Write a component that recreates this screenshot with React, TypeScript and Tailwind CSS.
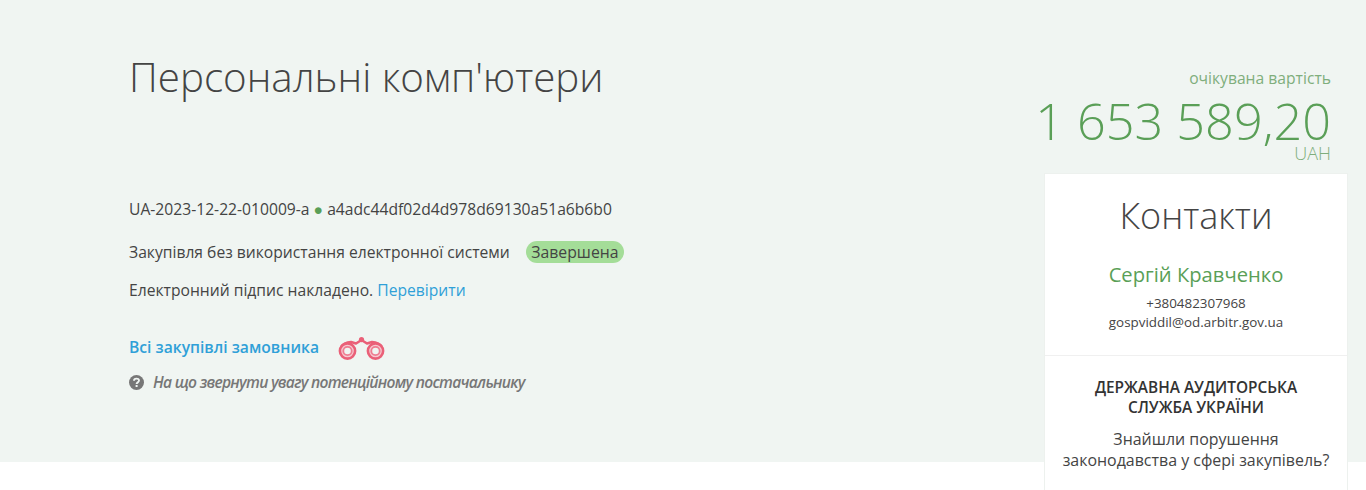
import React from 'react';

function Binoculars() {
  return (
    <svg width="48" height="26" viewBox="0 0 48 26" fill="none">
      <path d="M4 11 Q7 6.5 14 6 L19 7.5 L24.5 4 L30 7.5 L35 6 Q42 6.5 45 11" stroke="#ea6078" strokeWidth="2.6" strokeLinejoin="round" />
      <path d="M4 12 L14 6 L18 13 Z M45 12 L35 6 L31 13 Z" fill="#ea6078" />
      <circle cx="24.5" cy="3.6" r="2.6" fill="#ea6078" />
      <circle cx="10.5" cy="15" r="7.6" fill="#f6c9d1" stroke="#ea6078" strokeWidth="2.6" />
      <circle cx="10.5" cy="15" r="4.2" fill="#f0f5f2" stroke="#ee7d91" strokeWidth="1.8" />
      <circle cx="38.5" cy="15" r="7.6" fill="#f6c9d1" stroke="#ea6078" strokeWidth="2.6" />
      <circle cx="38.5" cy="15" r="4.2" fill="#f0f5f2" stroke="#ee7d91" strokeWidth="1.8" />
    </svg>
  );
}

function QuestionIcon() {
  return (
    <svg width="15" height="15" viewBox="0 0 15 15" className="shrink-0">
      <circle cx="7.5" cy="7.5" r="7.5" fill="#777777" />
      <path d="M5 5.8 C5 2.9 10 2.9 10 5.6 C10 7.4 7.6 7.3 7.6 9" fill="none" stroke="#f0f5f2" strokeWidth="1.9" />
      <rect x="6.6" y="10" width="2" height="2" fill="#f0f5f2" />
    </svg>
  );
}

export default function App() {
  return (
    <div className="h-[490px] overflow-hidden bg-white text-[#444444] font-['Open_Sans',sans-serif]">
      <section className="flex h-[462px] justify-between bg-[#f0f5f2] pl-[129px] pr-[19px]">
        <div className="pt-[48px]">
          <h1 className="text-[40.3px] font-light leading-[58px] text-[#444444]">Персональні комп'ютери</h1>
          <p className="mt-[92px] text-[15.67px] leading-[23px]">
            UA-2023-12-22-010009-a <span className="text-[#5a9f57]">●</span> a4adc44df02d4d978d69130a51a6b6b0
          </p>
          <div className="mt-[19px] flex items-center">
            <span className="text-[15.67px] leading-[24px]">Закупівля без використання електронної системи</span>
            <span className="ml-[16px] rounded-full bg-[#a4dd98] px-[5.5px] text-[15.8px] leading-[22px]">Завершена</span>
          </div>
          <p className="mt-[14px] text-[15.67px] leading-[24px]">
            Електронний підпис накладено. <a className="text-[#2fa0d8]">Перевірити</a>
          </p>
          <div className="mt-[30px] flex items-center">
            <a className="text-[15.67px] font-semibold leading-[24px] text-[#2fa0d8]">Всі закупівлі замовника</a>
            <span className="ml-[18px] mt-[4px] block"><Binoculars /></span>
          </div>
          <div className="mt-[8px] flex items-center gap-[9px]">
            <QuestionIcon />
            <span className="text-[15.6px] font-semibold italic leading-[24px] tracking-[-0.72px] text-[#777777]">На що звернути увагу потенційному постачальнику</span>
          </div>
        </div>
        <div className="flex w-[302px] flex-col">
          <div className="-ml-[20px] pr-[16px] pt-[67px] text-right">
            <p className="text-[15.67px] leading-[22px] text-[#7fae7c]">очікувана вартість</p>
            <p className="mt-[9px] whitespace-nowrap text-[50.4px] font-light leading-[46px] text-[#5a9f57]">1 653 589,20</p>
            <p className="text-[18px] font-light leading-[18px] text-[#7fae7c]">UAH</p>
          </div>
          <div className="mt-[12px] h-[400px] shrink-0 bg-white text-center shadow-[0_0_0_1px_#edf1ee]">
            <div className="h-[182px] border-b border-[#f0f0f0] pt-[17px]">
              <h2 className="text-[36px] font-light leading-[50px]">Контакти</h2>
              <p className="mt-[19px] text-[20.2px] leading-[28px] text-[#5a9f57]">Сергій Кравченко</p>
              <p className="mt-[6px] text-[13.4px] leading-[19px]">+380482307968</p>
              <p className="text-[13.4px] leading-[19px]">gospviddil@od.arbitr.gov.ua</p>
            </div>
            <div className="pt-[22px]">
              <p className="text-[15.4px] font-semibold leading-[20px] text-[#333333]">ДЕРЖАВНА АУДИТОРСЬКА<br />СЛУЖБА УКРАЇНИ</p>
              <p className="mt-[11px] text-[15.95px] leading-[21px]">Знайшли порушення<br />законодавства у сфері закупівель?</p>
            </div>
          </div>
        </div>
      </section>
    </div>
  );
}
